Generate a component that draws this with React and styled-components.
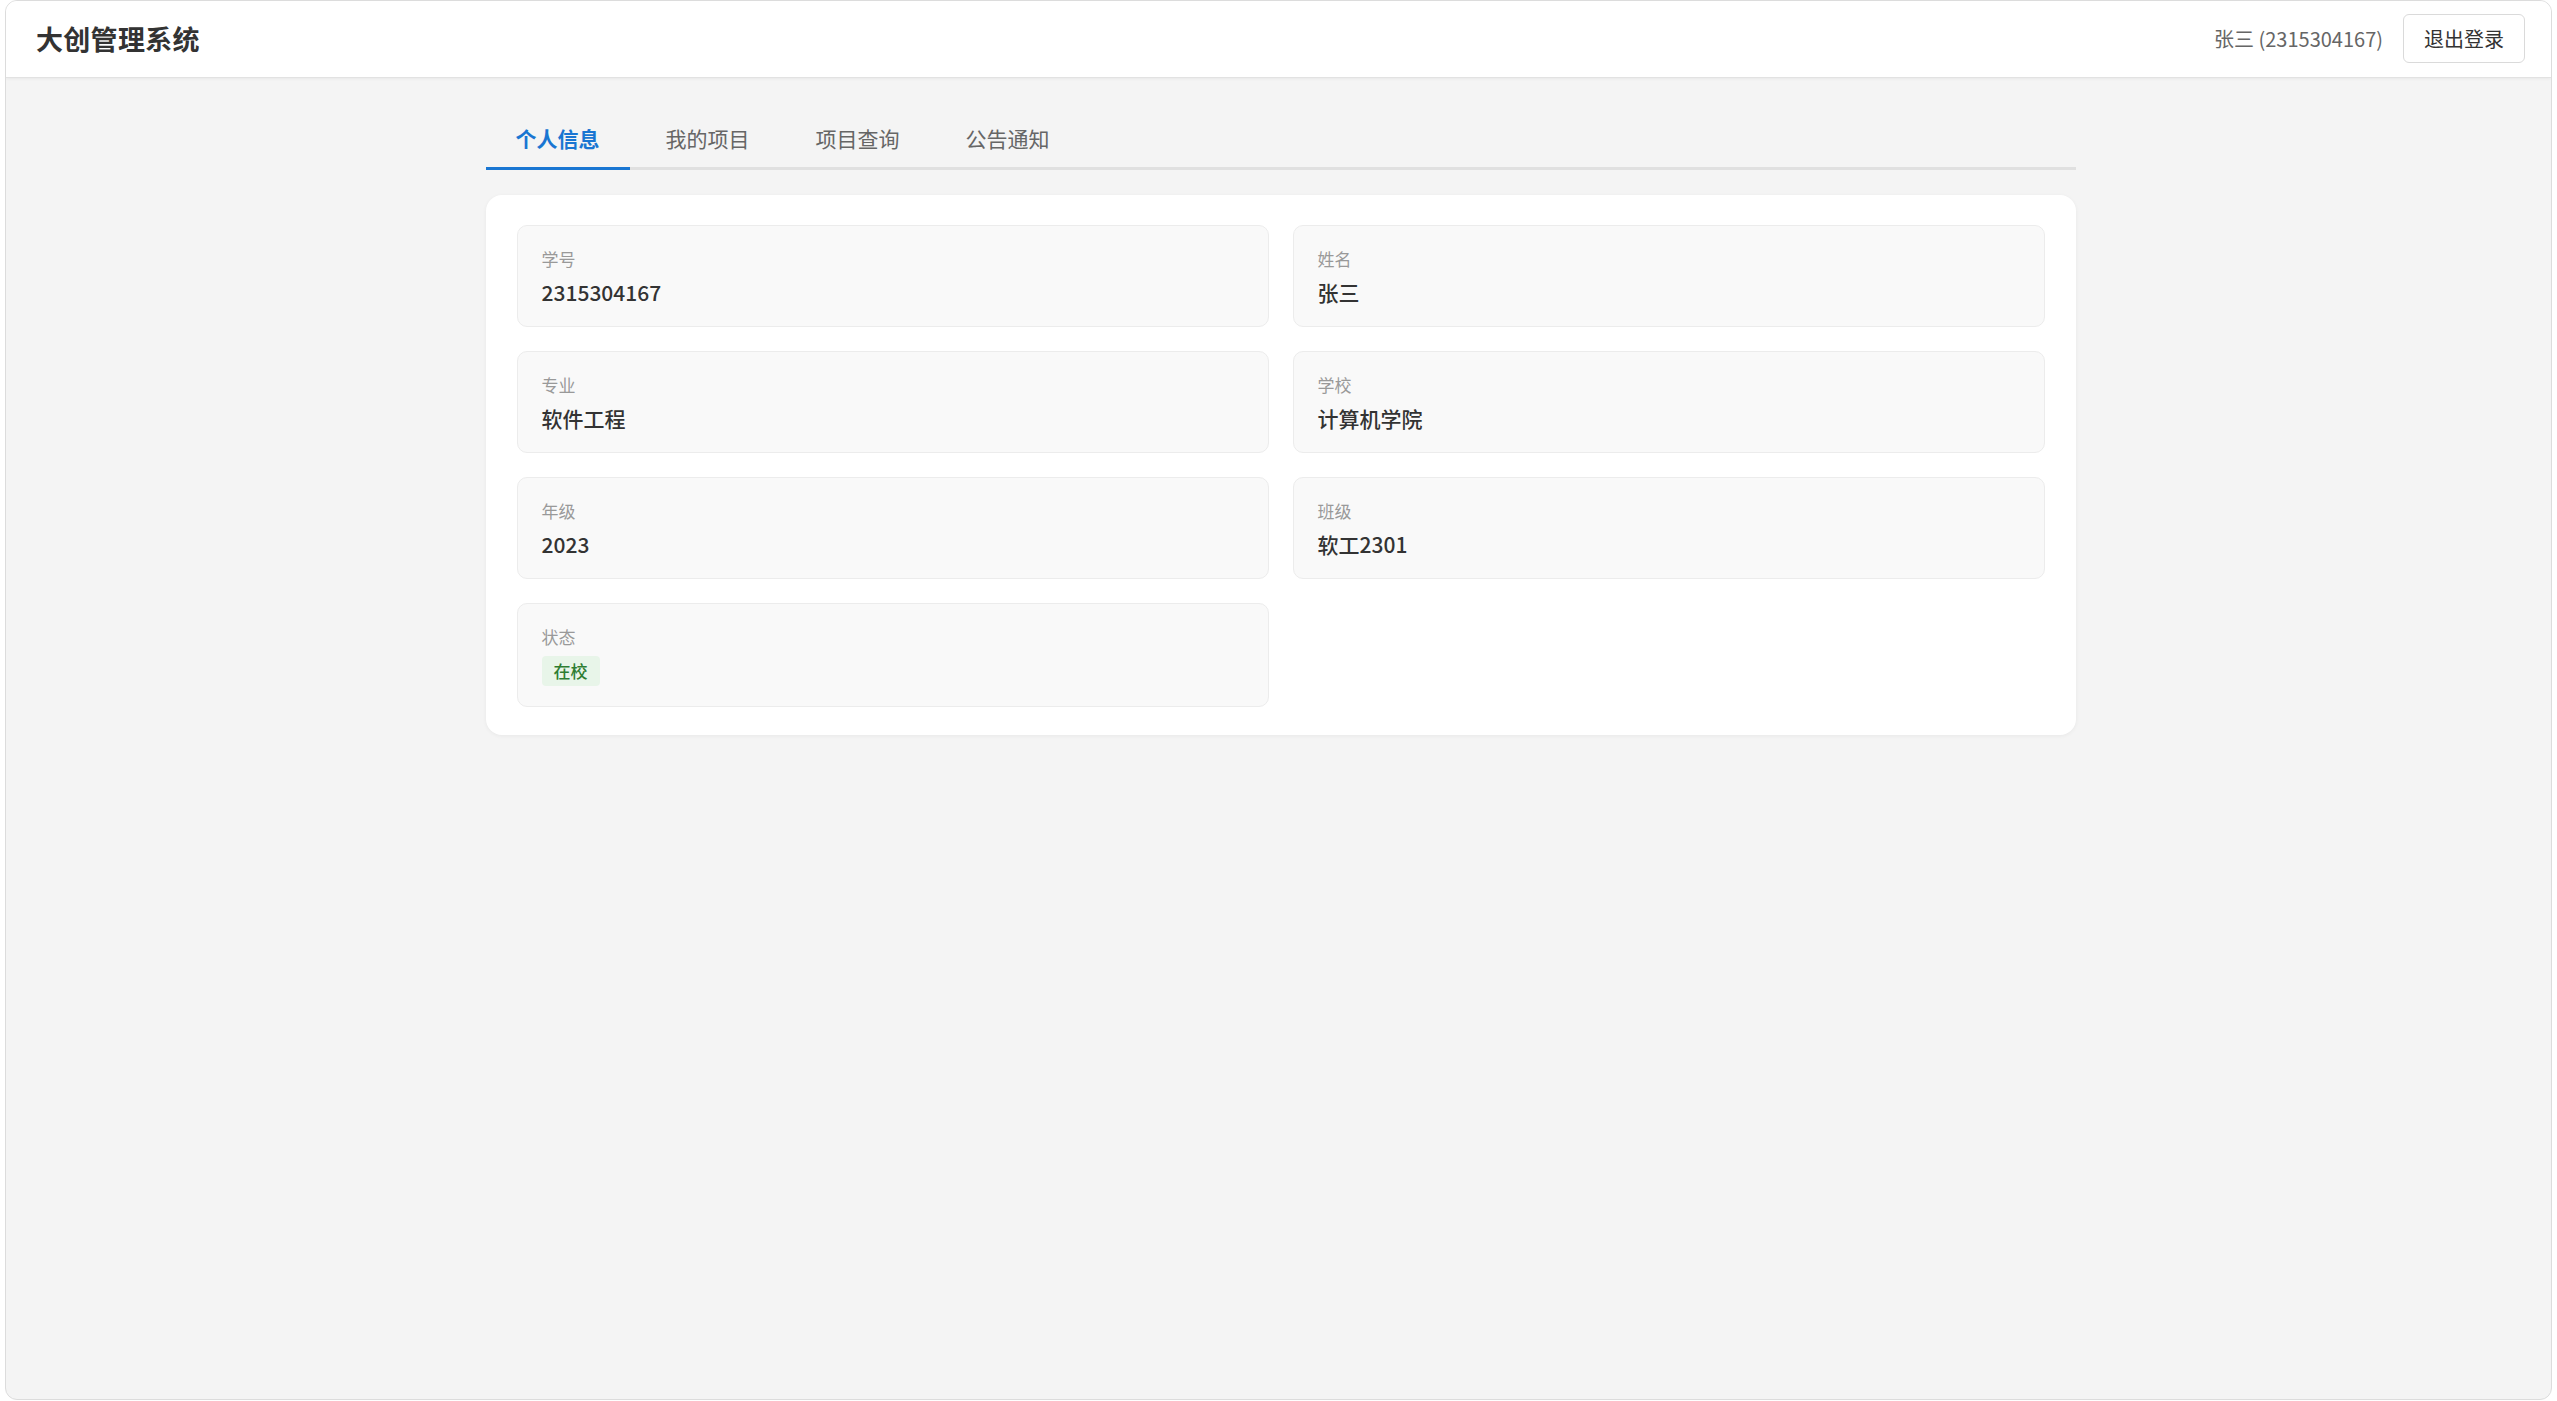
import React, { useState } from "react";
import styled, { createGlobalStyle } from "styled-components";

const GlobalStyle = createGlobalStyle`
  html, body {
    margin: 0;
    padding: 0;
    background: #ffffff;
  }
  body {
    font-family: "Noto Sans CJK SC", "Noto Sans", "Open Sans", sans-serif;
    color: #333;
  }
  * { box-sizing: border-box; }
`;

const Frame = styled.div`
  margin: 0 5px 0 5px;
  height: 1400px;
  border: 1px solid #dcdcdc;
  border-radius: 12px;
  background: #f4f4f4;
  overflow: hidden;
  display: flex;
  flex-direction: column;
`;

const Header = styled.header`
  height: 77px;
  flex: none;
  background: #ffffff;
  border-bottom: 1px solid #e2e2e2;
  box-shadow: 0 1px 3px rgba(0, 0, 0, 0.05);
  display: flex;
  align-items: center;
  justify-content: space-between;
  padding: 0 26px 2px 30px;
`;

const Title = styled.h1`
  margin: 0;
  font-size: 27px;
  font-weight: 700;
  color: #333;
  letter-spacing: 0.3px;
`;

const UserArea = styled.div`
  display: flex;
  align-items: center;
  gap: 20px;
`;

const UserName = styled.span`
  font-size: 20px;
  color: #666;
`;

const LogoutButton = styled.button`
  height: 49px;
  padding: 0 20px;
  font-family: inherit;
  font-size: 20px;
  color: #333;
  background: #ffffff;
  border: 1px solid #dadada;
  border-radius: 6px;
  cursor: pointer;
`;

const Main = styled.main`
  width: 1590px;
  margin-left: calc(50% - 793px);
  padding-top: 29px;
`;

const TabBar = styled.nav`
  display: flex;
  gap: 6px;
  border-bottom: 3px solid #e0e0e0;
`;

const Tab = styled.button`
  font-family: inherit;
  font-size: 21px;
  line-height: 31px;
  padding: 16px 30px 13px;
  margin-bottom: -3px;
  background: none;
  border: none;
  border-bottom: 3px solid ${(p) => (p.$active ? "#1976d2" : "transparent")};
  color: ${(p) => (p.$active ? "#1976d2" : "#666")};
  font-weight: ${(p) => (p.$active ? 600 : 400)};
  cursor: pointer;
`;

const Card = styled.section`
  margin-top: 25px;
  background: #ffffff;
  border-radius: 16px;
  box-shadow: 0 1px 4px rgba(0, 0, 0, 0.05);
  padding: 30px 31px 28px;
  display: grid;
  grid-template-columns: 1fr 1fr;
  gap: 24px;
`;

const Field = styled.div`
  background: #f9f9f9;
  border: 1px solid #ececec;
  border-radius: 10px;
  padding: 21px 24px 20px;
`;

const Label = styled.div`
  font-size: 17px;
  line-height: 23px;
  color: #999;
`;

const Value = styled.div`
  margin-top: 8px;
  font-size: 21px;
  line-height: 28px;
  font-weight: 500;
  color: #333;
`;

const Badge = styled.span`
  display: inline-block;
  margin-top: 8px;
  padding: 4px 12px;
  font-size: 17px;
  line-height: 22px;
  font-weight: 500;
  color: #2e7d32;
  background: #e8f5e9;
  border-radius: 4px;
`;

const tabs = ["个人信息", "我的项目", "项目查询", "公告通知"];

const fields = [
  { label: "学号", value: "2315304167" },
  { label: "姓名", value: "张三" },
  { label: "专业", value: "软件工程" },
  { label: "学校", value: "计算机学院" },
  { label: "年级", value: "2023" },
  { label: "班级", value: "软工2301" },
];

export default function App() {
  const [active, setActive] = useState(0);
  return (
    <>
      <GlobalStyle />
      <Frame>
        <Header>
          <Title>大创管理系统</Title>
          <UserArea>
            <UserName>张三 (2315304167)</UserName>
            <LogoutButton>退出登录</LogoutButton>
          </UserArea>
        </Header>
        <Main>
          <TabBar>
            {tabs.map((t, i) => (
              <Tab key={t} $active={i === active} onClick={() => setActive(i)}>
                {t}
              </Tab>
            ))}
          </TabBar>
          <Card>
            {fields.map((f) => (
              <Field key={f.label}>
                <Label>{f.label}</Label>
                <Value>{f.value}</Value>
              </Field>
            ))}
            <Field>
              <Label>状态</Label>
              <Badge>在校</Badge>
            </Field>
          </Card>
        </Main>
      </Frame>
    </>
  );
}
